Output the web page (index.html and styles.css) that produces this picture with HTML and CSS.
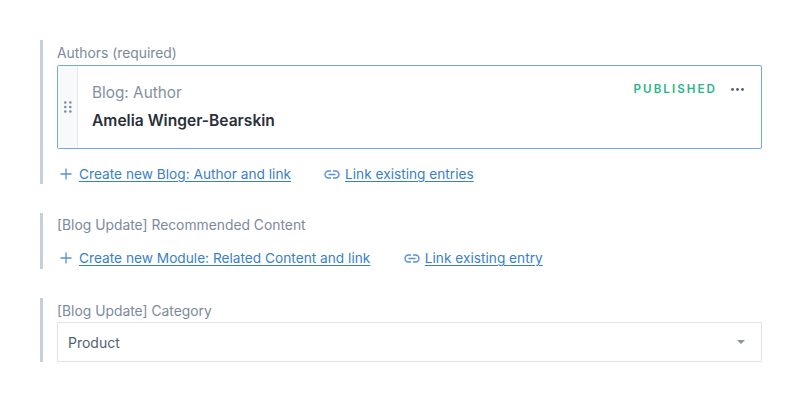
FILE: index.html
```html
<!DOCTYPE html>
<html lang="en">
<head>
<meta charset="utf-8">
<title>Entry fields</title>
<link rel="stylesheet" href="styles.css">
</head>
<body>
<main class="form">
  <section class="field field-authors">
    <div class="label">Authors (required)</div>
    <div class="card">
      <div class="handle">
        <svg width="8" height="12" viewBox="0 0 8 12"><g fill="#7b8da2"><circle cx="1.3" cy="1.5" r="1.3"/><circle cx="6.3" cy="1.5" r="1.3"/><circle cx="1.3" cy="6" r="1.3"/><circle cx="6.3" cy="6" r="1.3"/><circle cx="1.3" cy="10.5" r="1.3"/><circle cx="6.3" cy="10.5" r="1.3"/></g></svg>
      </div>
      <div class="card-body">
        <div class="card-text">
          <div class="card-type">Blog: Author</div>
          <div class="card-title">Amelia Winger-Bearskin</div>
        </div>
        <div class="card-meta">
          <span class="status">PUBLISHED</span>
          <svg class="more" width="13" height="3" viewBox="0 0 13 3"><g fill="#536171"><circle cx="1.5" cy="1.5" r="1.4"/><circle cx="6.5" cy="1.5" r="1.4"/><circle cx="11.5" cy="1.5" r="1.4"/></g></svg>
        </div>
      </div>
    </div>
    <div class="actions actions-authors">
      <a class="action action-wide" href="#"><svg class="plus" width="12" height="12" viewBox="0 0 12 12"><path d="M6 .5v11M.5 6h11" stroke="#2e75d4" stroke-width="1.3" fill="none"/></svg>Create new Blog: Author and link</a>
      <a class="action" href="#"><svg class="chain" width="16" height="9" viewBox="0 0 16 9"><path d="M7 1H4.5a3.5 3.5 0 0 0 0 7H7M9 1h2.5a3.5 3.5 0 0 1 0 7H9M4.5 4.5h7" stroke="#2e75d4" stroke-width="1.4" fill="none"/></svg>Link existing entries</a>
    </div>
  </section>
  <section class="field field-related">
    <div class="label label-tight">[Blog Update] Recommended Content</div>
    <div class="actions actions-related">
      <a class="action action-wide" href="#"><svg class="plus" width="12" height="12" viewBox="0 0 12 12"><path d="M6 .5v11M.5 6h11" stroke="#2e75d4" stroke-width="1.3" fill="none"/></svg>Create new Module: Related Content and link</a>
      <a class="action" href="#"><svg class="chain" width="16" height="9" viewBox="0 0 16 9"><path d="M7 1H4.5a3.5 3.5 0 0 0 0 7H7M9 1h2.5a3.5 3.5 0 0 1 0 7H9M4.5 4.5h7" stroke="#2e75d4" stroke-width="1.4" fill="none"/></svg>Link existing entry</a>
    </div>
  </section>
  <section class="field field-category">
    <div class="label">[Blog Update] Category</div>
    <div class="select">
      <span>Product</span>
      <span class="caret"></span>
    </div>
  </section>
</main>
</body>
</html>
```
FILE: styles.css
```css
* { box-sizing: border-box; }
html, body { margin: 0; padding: 0; background: #fff; }
body {
  width: 806px;
  height: 409px;
  overflow: hidden;
  font-family: Inter, "Liberation Sans", sans-serif;
  font-size: 14px;
  color: #2a3039;
}
.form {
  padding: 40px 44px 0 40px;
  display: flex;
  flex-direction: column;
  gap: 29px;
}
.field {
  border-left: 3px solid #c5d0db;
  padding-left: 14px;
}
.field-authors { height: 144px; }
.field-related { height: 56px; }
.field-category { height: 64px; }
.label {
  color: #7c8a9b;
  font-size: 13.85px;
  line-height: 17px;
  height: 17px;
  padding-top: 5px;
  box-sizing: content-box;
}
.label-tight { padding-top: 4px; }
.card {
  margin-top: 3px;
  height: 84px;
  display: flex;
  border: 1px solid #6ea8e8;
  border-radius: 2px;
}
.handle {
  width: 20px;
  flex: none;
  background: #f7f9fa;
  border-right: 1px solid #e5ebed;
  display: flex;
  align-items: center;
  justify-content: center;
}
.card-body {
  flex: 1;
  display: flex;
  justify-content: space-between;
  padding: 16px 17px 0 14px;
}
.card-text { padding-top: 1px; }
.card-type {
  font-size: 15.35px;
  line-height: 20px;
  color: #8390a0;
}
.card-title {
  margin-top: 8px;
  font-size: 15.6px;
  line-height: 20px;
  font-weight: 600;
  color: #2a3039;
}
.card-meta {
  display: flex;
  align-items: center;
  gap: 14px;
  height: 14px;
}
.status {
  font-size: 11.6px;
  font-weight: 600;
  letter-spacing: 2.05px;
  color: #28b588;
}
.actions {
  display: flex;
  color: #3a7fc8;
  font-size: 13.7px;
}
.actions-authors { margin-top: 16px; }
.actions-related { margin-top: 15px; }
.action {
  display: flex;
  align-items: center;
  color: #3a7fc8;
  text-decoration: underline;
  text-underline-offset: 2px;
  line-height: 18px;
}
.action-wide { margin-right: 33px; }
.actions-related .action-wide { margin-right: 33.5px; }
.plus { margin: 0 7px 0 3px; opacity: .8; }
.chain { margin-right: 5px; opacity: .8; }
.select {
  margin-top: 2px;
  height: 40px;
  border: 1px solid #dfe4e7;
  display: flex;
  align-items: center;
  justify-content: space-between;
  padding: 0 16px 0 10px;
  color: #536171;
}
.caret {
  width: 0;
  height: 0;
  border-left: 4px solid transparent;
  border-right: 4px solid transparent;
  border-top: 4px solid #8a94a3;
}
```
